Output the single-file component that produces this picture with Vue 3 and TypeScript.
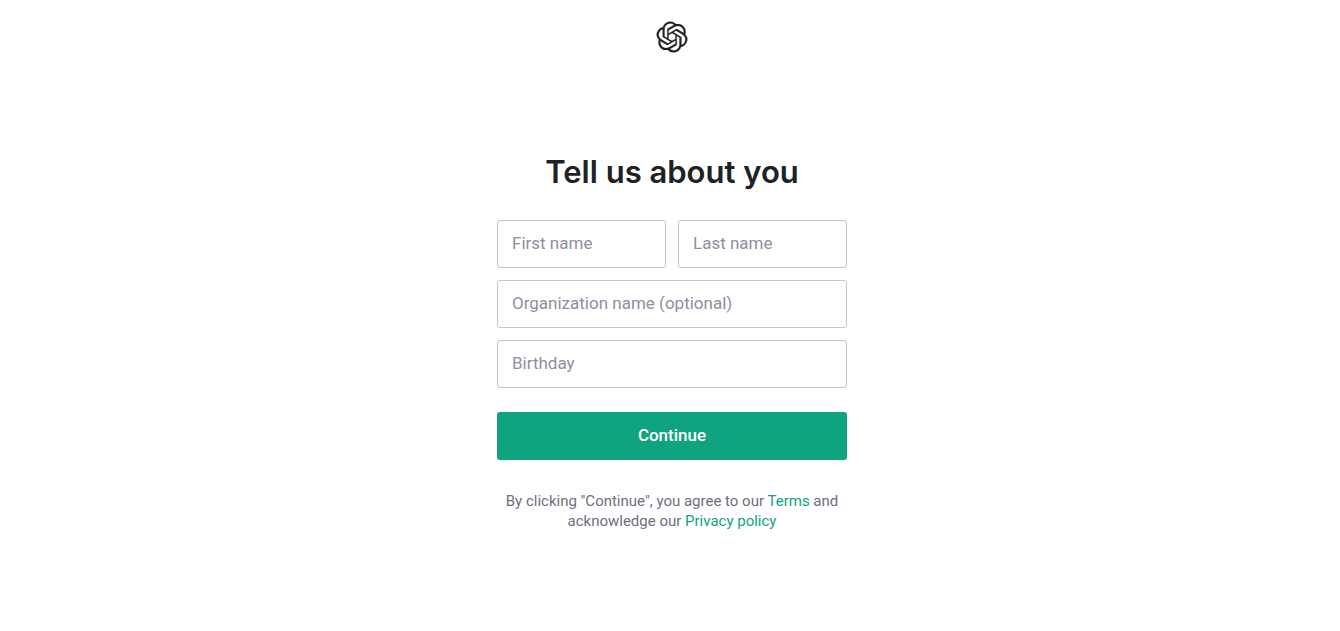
<script setup lang="ts">
import { ref } from 'vue'

const firstName = ref('')
const lastName = ref('')
const organization = ref('')
const birthday = ref('')
</script>

<template>
  <div class="page">
    <header class="header">
      <svg class="logo" viewBox="-0.4 -0.4 24.8 24.8" role="img" aria-label="OpenAI">
        <path fill="currentColor" stroke="currentColor" stroke-width="0.1" d="M22.2819 9.8211a5.9847 5.9847 0 0 0-.5157-4.9108 6.0462 6.0462 0 0 0-6.5098-2.9A6.0651 6.0651 0 0 0 4.9807 4.1818a5.9847 5.9847 0 0 0-3.9977 2.9 6.0462 6.0462 0 0 0 .7427 7.0966 5.98 5.98 0 0 0 .511 4.9107 6.051 6.051 0 0 0 6.5146 2.9001A5.9847 5.9847 0 0 0 13.2599 24a6.0557 6.0557 0 0 0 5.7718-4.2058 5.9894 5.9894 0 0 0 3.9977-2.9001 6.0557 6.0557 0 0 0-.7475-7.0729zm-9.022 12.6081a4.4755 4.4755 0 0 1-2.8764-1.0408l.1419-.0804 4.7783-2.7582a.7948.7948 0 0 0 .3927-.6813v-6.7369l2.02 1.1686a.071.071 0 0 1 .038.052v5.5826a4.504 4.504 0 0 1-4.4945 4.4944zm-9.6607-4.1254a4.4708 4.4708 0 0 1-.5346-3.0137l.142.0852 4.783 2.7582a.7712.7712 0 0 0 .7806 0l5.8428-3.3685v2.3324a.0804.0804 0 0 1-.0332.0615L9.74 19.9502a4.4992 4.4992 0 0 1-6.1408-1.6464zM2.3408 7.8956a4.485 4.485 0 0 1 2.3655-1.9728V11.6a.7664.7664 0 0 0 .3879.6765l5.8144 3.3543-2.0201 1.1685a.0757.0757 0 0 1-.071 0l-4.8303-2.7865A4.504 4.504 0 0 1 2.3408 7.872zm16.5963 3.8558L13.1038 8.364 15.1192 7.2a.0757.0757 0 0 1 .071 0l4.8303 2.7913a4.4944 4.4944 0 0 1-.6765 8.1042v-5.6772a.79.79 0 0 0-.407-.667zm2.0107-3.0231l-.142-.0852-4.7735-2.7818a.7759.7759 0 0 0-.7854 0L9.409 9.2297V6.8974a.0662.0662 0 0 1 .0284-.0615l4.8303-2.7866a4.4992 4.4992 0 0 1 6.6802 4.66zM8.3065 12.863l-2.02-1.1638a.0804.0804 0 0 1-.038-.0567V6.0742a4.4992 4.4992 0 0 1 7.3757-3.4537l-.142.0805L8.704 5.459a.7948.7948 0 0 0-.3927.6813zm1.0976-2.3654l2.602-1.4998 2.6069 1.4998v2.9994l-2.5974 1.4997-2.6067-1.4997Z" />
      </svg>
    </header>
    <main class="card">
      <h1 class="title">Tell us about you</h1>
      <form class="form" @submit.prevent>
        <div class="row">
          <input v-model="firstName" class="field" type="text" placeholder="First name" aria-label="First name" />
          <input v-model="lastName" class="field" type="text" placeholder="Last name" aria-label="Last name" />
        </div>
        <input v-model="organization" class="field" type="text" placeholder="Organization name (optional)" aria-label="Organization name (optional)" />
        <input v-model="birthday" class="field" type="text" placeholder="Birthday" aria-label="Birthday" />
        <button class="submit" type="submit">Continue</button>
      </form>
      <p class="terms">
        By clicking "Continue", you agree to our <a href="#terms">Terms</a> and acknowledge our
        <a href="#privacy">Privacy policy</a>
      </p>
    </main>
  </div>
</template>

<style>
body {
  margin: 0;
  background: #fff;
}
</style>

<style scoped>
.page {
  display: flex;
  flex-direction: column;
  align-items: center;
  min-height: 100vh;
  padding: 21px 16px 32px 20px;
  box-sizing: border-box;
  color: #202123;
  font-family: Roboto, "Liberation Sans", sans-serif;
}
.header,
.logo {
  display: block;
}
.logo {
  width: 32px;
  height: 32px;
}
.card {
  width: 100%;
  max-width: 350px;
  margin-top: 99px;
}
.title {
  margin: 0 0 28px;
  font-family: Inter, sans-serif;
  font-size: 31px;
  font-weight: 600;
  line-height: 40px;
  text-align: center;
}
.form {
  display: flex;
  flex-direction: column;
  gap: 12px;
}
.row {
  display: grid;
  grid-template-columns: 1fr 1fr;
  gap: 12px;
}
.field {
  width: 100%;
  min-width: 0;
  height: 48px;
  box-sizing: border-box;
  padding: 0 14px 2px;
  border: 1px solid #c5c5d2;
  border-radius: 3px;
  background: #fff;
  color: #353740;
  font: 400 17px/24px Roboto, sans-serif;
}
.field::placeholder {
  color: #8e8ea0;
  opacity: 1;
}
.submit {
  height: 48px;
  margin-top: 12px;
  padding: 0 14px 2px;
  border: 0;
  border-radius: 3px;
  background: #10a37f;
  color: #fff;
  font: 500 17px/24px Roboto, sans-serif;
  cursor: pointer;
}
.terms {
  margin: 31px 0 0;
  color: #6e6e80;
  font-size: 15px;
  line-height: 20px;
  text-align: center;
}
.terms a {
  color: #10a37f;
  text-decoration: none;
}
</style>
